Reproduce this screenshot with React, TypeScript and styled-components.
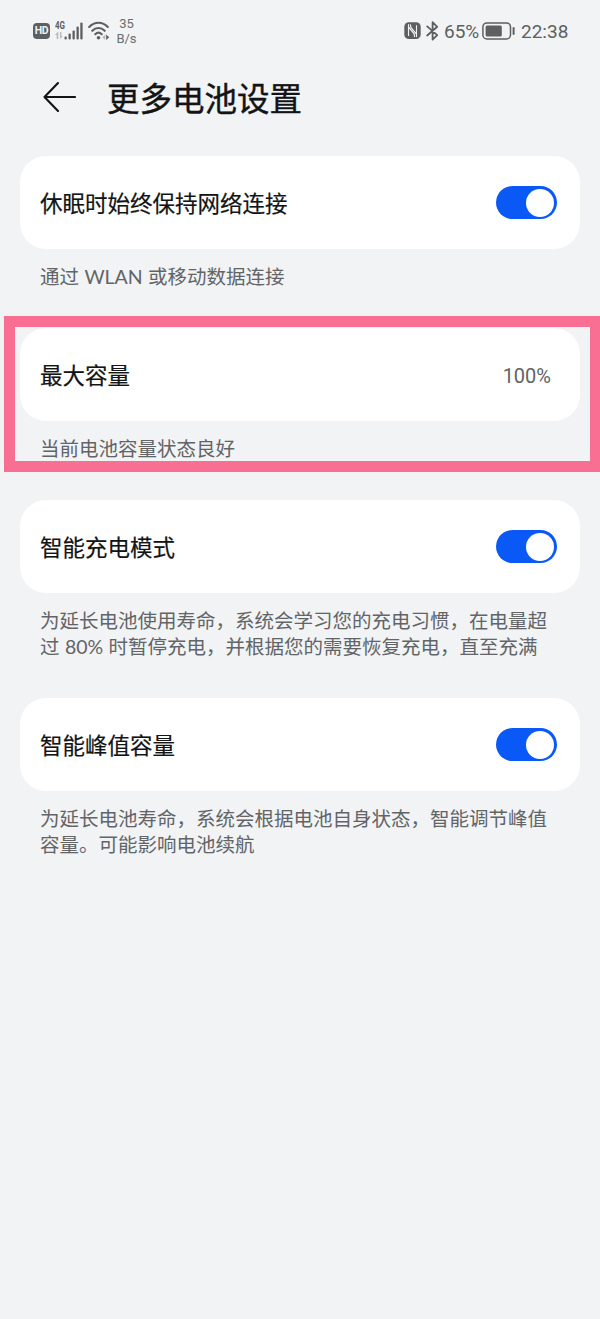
import React from "react";
import styled, { createGlobalStyle } from "styled-components";

const GlobalStyle = createGlobalStyle`
  * { box-sizing: border-box; }
  body { margin: 0; background: #f1f3f5; }
`;

const Screen = styled.div`
  width: 600px;
  height: 1319px;
  background: #f1f3f5;
  overflow: hidden;
  color: #131415;
  font-family: "Noto Sans CJK SC", sans-serif;
  white-space: nowrap;
`;

const StatusBar = styled.header`
  height: 62px;
  padding: 0 32px 0 33px;
  display: flex;
  align-items: center;
  justify-content: space-between;
  color: #5d5f61;
  font-family: Roboto, sans-serif;
`;

const StatusGroup = styled.div<{ $gap?: number }>`
  display: flex;
  align-items: center;
  gap: ${(p) => p.$gap ?? 0}px;
`;

const HdBadge = styled.span`
  width: 17px;
  height: 16px;
  border-radius: 4px;
  background: #5d5f61;
  color: #f1f3f5;
  font: 700 10.5px/16px Roboto, sans-serif;
  letter-spacing: -0.3px;
  text-align: center;
`;

const Speed = styled.div`
  width: 22px;
  margin-left: 0.5px;
  font-size: 13px;
  line-height: 15px;
  text-align: center;
  color: #6b6d6f;
`;

const StatusText = styled.span<{ $width: number }>`
  width: ${(p) => p.$width}px;
  font: 400 19px/24px Roboto, sans-serif;
  padding-top: 1px;
`;

const TitleBar = styled.div`
  height: 94px;
  padding: 0 0 25px 43px;
  display: flex;
  align-items: center;
`;

const Title = styled.h1`
  margin: 0 0 0 31px;
  font-size: 32.5px;
  line-height: 48px;
  font-weight: 400;
  -webkit-text-stroke: 0.4px #131415;
`;

const Section = styled.section<{ $height: number }>`
  position: relative;
  height: ${(p) => p.$height}px;
  padding: 0 20px;
`;

const Card = styled.div`
  height: 93px;
  padding: 0 23px 0 20px;
  border-radius: 26px;
  background: #fff;
  display: flex;
  align-items: center;
  justify-content: space-between;
`;

const Label = styled.span`
  padding-bottom: 1px;
  font-size: 22.5px;
  line-height: 32px;
  font-weight: 400;
  -webkit-text-stroke: 0.2px #131415;
`;

const Value = styled.span`
  margin-right: 6px;
  padding-top: 2px;
  font-family: Roboto, sans-serif;
  font-size: 20px;
  line-height: 28px;
  color: #626365;
`;

const Switch = styled.button`
  width: 61px;
  height: 33px;
  padding: 2.5px 3px;
  border: 0;
  border-radius: 17px;
  background: #0a59f7;
  display: flex;
  justify-content: flex-end;
  align-items: center;
`;

const Knob = styled.span`
  width: 28px;
  height: 28px;
  border-radius: 50%;
  background: #fff;
`;

const Hint = styled.div`
  padding: 15px 20px 0;
  font-family: Lato, "Noto Sans CJK SC", sans-serif;
  font-size: 19.5px;
  line-height: 26px;
  word-spacing: 0.4px;
  color: #626466;
`;

const HintLine = styled.p`
  margin: 0;
  height: 26px;
`;

const Highlight = styled.div`
  position: absolute;
  left: 4px;
  right: 0;
  top: -12px;
  height: 156px;
  border: 11px solid #f96f94;
  border-right-width: 10px;
`;

const SignalIcon = () => (
  <svg width="28" height="22" viewBox="0 0 28 22" fill="#5d5f61">
    <text x="0" y="9" fontFamily="Roboto" fontSize="10" fontWeight="700" textLength="10" lengthAdjust="spacingAndGlyphs">4G</text>
    <path d="M2.7 12 0 15h1.7v4h1.6v-7ZM5 12v7l2.8-3H6.4v-4Z" fill="#b7b9bb" />
    <rect x="9.5" y="16.5" width="2.3" height="3" rx="1" />
    <rect x="13.5" y="13.5" width="2.3" height="6" rx="1" />
    <rect x="17.5" y="10.5" width="2.3" height="9" rx="1" />
    <rect x="21.5" y="6.5" width="2.3" height="13" rx="1" />
    <rect x="25.3" y="2.5" width="2.3" height="17" rx="1" />
  </svg>
);

const WifiIcon = () => (
  <svg width="22" height="20" viewBox="0 0 22 20" fill="none" stroke="#5d5f61" strokeWidth="2.1" strokeLinecap="round">
    <path d="M1.2 6C6.5.4 14.5.4 19.8 6M4.3 9.8c3.6-3.7 8.8-3.7 12.4 0M7.3 13.2c2-1.9 4.4-1.9 6.4 0" />
    <circle cx="10.5" cy="16.7" r="1.8" fill="#5d5f61" stroke="none" />
    <path d="m17.3 13.5-3 2.8 3 2.8Z" fill="#b7b9bb" stroke="none" />
    <path d="m18.2 13.5 3 2.8-3 2.8Z" fill="#5d5f61" stroke="none" />
  </svg>
);

const NfcIcon = () => (
  <svg width="17" height="18" viewBox="0 0 17 18">
    <rect x="0.3" y="0.2" width="16.4" height="16.8" rx="4.5" fill="#5d5f61" />
    <path d="M4.5 13.6V2.6M12.5 3.6v11" stroke="#f1f3f5" strokeWidth="1.1" strokeLinecap="round" />
    <path d="M6.3 2.4 7 5.6l5.5 6.6M4.5 5l5.5 6.6.7 3.4" fill="none" stroke="#f1f3f5" strokeWidth="1.2" />
  </svg>
);

const BluetoothIcon = () => (
  <svg width="13" height="20" viewBox="0 0 13 20" fill="none" stroke="#5d5f61" strokeWidth="1.8" strokeLinejoin="round" strokeLinecap="round">
    <path d="m1.2 5.4 10 8.7-4.6 4.5V1.2l4.6 4.6-10 8.7" />
  </svg>
);

const BatteryIcon = () => (
  <svg width="34" height="18" viewBox="0 0 34 18" fill="#5d5f61">
    <rect x="0.9" y="0.9" width="27.6" height="16" rx="4" fill="none" stroke="#5d5f61" strokeWidth="1.5" />
    <rect x="3.6" y="3.6" width="16.2" height="10.8" rx="1.5" />
    <rect x="30.6" y="5" width="2" height="8" rx="1" />
  </svg>
);

const BackIcon = () => (
  <svg width="33" height="32" viewBox="0 0 33 32" fill="none" stroke="#131415" strokeWidth="2.1" strokeLinecap="round" strokeLinejoin="round">
    <path d="M32 16H1.5M15 2 1.5 16 15 30" />
  </svg>
);

type Item = { label: string; hint: string[]; height: number; value?: string };

const items: Item[] = [
  { label: "休眠时始终保持网络连接", hint: ["通过 WLAN 或移动数据连接"], height: 172 },
  { label: "最大容量", hint: ["当前电池容量状态良好"], height: 172, value: "100%" },
  {
    label: "智能充电模式",
    hint: ["为延长电池使用寿命，系统会学习您的充电习惯，在电量超", "过 80% 时暂停充电，并根据您的需要恢复充电，直至充满"],
    height: 198,
  },
  {
    label: "智能峰值容量",
    hint: ["为延长电池寿命，系统会根据电池自身状态，智能调节峰值", "容量。可能影响电池续航"],
    height: 198,
  },
];

export default function App() {
  return (
    <>
      <GlobalStyle />
      <Screen lang="zh-CN">
        <StatusBar>
          <StatusGroup $gap={5}>
            <HdBadge>HD</HdBadge>
            <SignalIcon />
            <WifiIcon />
            <Speed>35<br />B/s</Speed>
          </StatusGroup>
          <StatusGroup $gap={5}>
            <StatusGroup $gap={5}>
              <NfcIcon />
              <BluetoothIcon />
            </StatusGroup>
            <StatusGroup $gap={3}>
              <StatusText $width={35}>65%</StatusText>
              <BatteryIcon />
            </StatusGroup>
            <StatusText $width={47}>22:38</StatusText>
          </StatusGroup>
        </StatusBar>
        <TitleBar>
          <BackIcon />
          <Title>更多电池设置</Title>
        </TitleBar>
        {items.map((item) => (
          <Section key={item.label} $height={item.height}>
            <Card>
              <Label>{item.label}</Label>
              {item.value ? <Value>{item.value}</Value> : <Switch aria-label={item.label}><Knob /></Switch>}
            </Card>
            <Hint>
              {item.hint.map((line) => (
                <HintLine key={line}>{line}</HintLine>
              ))}
            </Hint>
            {item.value && <Highlight />}
          </Section>
        ))}
      </Screen>
    </>
  );
}
